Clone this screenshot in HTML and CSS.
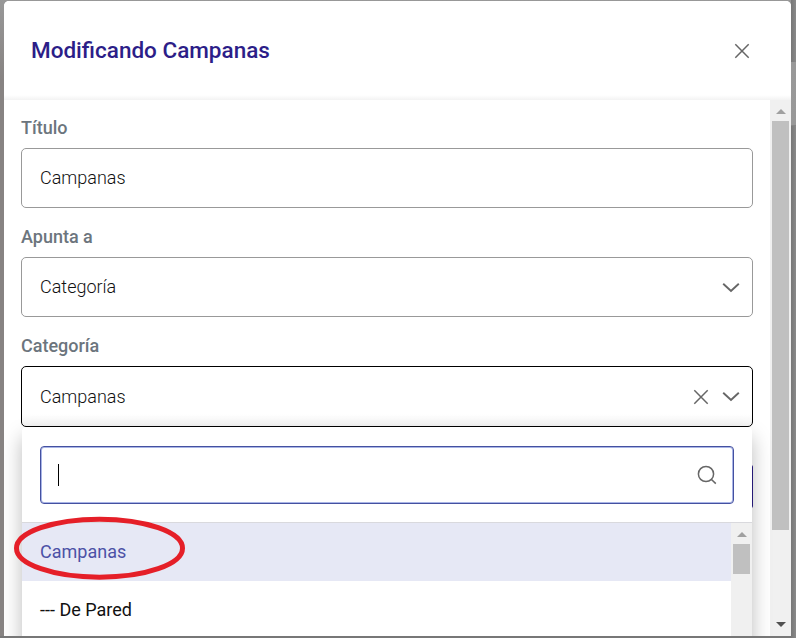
FILE: index.html
```html
<!DOCTYPE html>
<html lang="es">
<head>
<meta charset="utf-8">
<title>Modificando Campanas</title>
<link rel="stylesheet" href="styles.css">
</head>
<body>
<div class="modal">
  <header class="header">
    <h1>Modificando Campanas</h1>
    <svg class="close" width="16" height="16" viewBox="0 0 16 16"><path d="M1.3 1.3 14.7 14.7M14.7 1.3 1.3 14.7"/></svg>
  </header>
  <div class="body">
    <form class="form">
      <div class="label">Título</div>
      <div class="field"><span>Campanas</span></div>
      <div class="label">Apunta a</div>
      <div class="field"><span>Categoría</span>
        <svg class="chevron" width="18" height="11" viewBox="0 0 18 11"><path d="M1.2 1.7 9 9 16.8 1.7"/></svg>
      </div>
      <div class="label">Categoría</div>
      <div class="field open"><span>Campanas</span>
        <svg class="clear" width="16" height="16" viewBox="0 0 16 16"><path d="M1.3 1.3 14.7 14.7M14.7 1.3 1.3 14.7"/></svg>
        <svg class="chevron" width="18" height="11" viewBox="0 0 18 11"><path d="M1.2 1.7 9 9 16.8 1.7"/></svg>
        <div class="button-edge"></div>
        <div class="dropdown">
          <div class="search">
            <i class="caret"></i>
            <svg width="20" height="20" viewBox="0 0 20 20"><circle cx="9" cy="9" r="7.6"/><path d="M14.2 14.2 18.8 18.6"/></svg>
          </div>
          <div class="results">
            <div class="options">
              <div class="option selected">Campanas</div>
              <div class="option">--- De Pared</div>
            </div>
            <div class="scrollbar"><i class="up"></i><i class="thumb small"></i></div>
          </div>
        </div>
      </div>
    </form>
    <div class="scrollbar"><i class="up"></i><i class="thumb"></i><i class="down"></i></div>
  </div>
</div>
<svg class="mark" width="172" height="64" viewBox="0 0 172 64"><ellipse cx="85.5" cy="32.2" rx="83" ry="29"/></svg>
</body>
</html>
```
FILE: styles.css
```css
* { box-sizing: border-box; }
body {
  margin: 0;
  height: 638px;
  overflow: hidden;
  padding: 1px 5px 2px 4px;
  background:
    linear-gradient(#858585, #858585) 791px 125px / 5px 1px no-repeat,
    linear-gradient(#999, #989898) 791px 62px / 5px 63px no-repeat,
    linear-gradient(90deg, #777, #8a8a8a) 791px 0 / 5px 638px no-repeat,
    linear-gradient(#777, #777) 0 636px / 796px 2px no-repeat,
    linear-gradient(#989898, #878382 80px, #878382);
  font-family: Roboto, "Liberation Sans", sans-serif;
  font-size: 18px;
  color: #111;
}
.modal {
  display: flex;
  flex-direction: column;
  width: 787px;
  height: 635px;
  overflow: hidden;
  background: #fff;
  border-radius: 5px 5px 0 0;
}
.header {
  display: flex;
  flex: 0 0 99px;
  align-items: center;
  justify-content: space-between;
  padding: 0 41px 0 27px;
  background: linear-gradient(#fff 94px, #f3f3f3);
}
h1 {
  margin: 0;
  padding-bottom: 2px;
  font-size: 22.5px;
  font-weight: 500;
  line-height: 30px;
  color: #2c1e88;
}
svg { display: block; fill: none; stroke: #666; stroke-width: 1.5; }
.body { display: flex; flex: 1; min-height: 0; }
.form { flex: 1; padding: 17px 17px 0; }
.label {
  height: 22px;
  margin-bottom: 9px;
  font-weight: 500;
  line-height: 22px;
  color: #6c757d;
}
.field {
  position: relative;
  display: flex;
  align-items: center;
  width: 732px;
  height: 60px;
  margin-bottom: 18px;
  padding: 0 12px 0 18px;
  border: 1px solid #999;
  border-radius: 5px;
  font-weight: 300;
}
.field span { flex: 1; padding-bottom: 2px; }
.field.open span { padding-bottom: 0; }
.field.open {
  height: 61px;
  border-color: #000;
  background: linear-gradient(#fff 47px, #f4f4f4);
}
.clear { margin-right: 13px; }
.chevron { stroke-width: 1.9; }
.button-edge {
  position: absolute;
  top: 98px;
  right: -1px;
  width: 4px;
  height: 43px;
  border-right: 1px solid #2c1e88;
  border-radius: 2px;
}
.dropdown {
  position: absolute;
  top: 60px;
  left: 0;
  width: 730px;
  height: 230px;
  padding-top: 19px;
  background: #fff;
  border-radius: 4px;
  box-shadow: 0 10px 20px rgba(0, 0, 0, .27);
  font-weight: 400;
}
.search {
  display: flex;
  align-items: center;
  justify-content: space-between;
  height: 58px;
  margin: 0 18px 18px;
  padding: 0 16px 0 17px;
  border: 1px solid #4450a0;
  border-radius: 4px;
  box-shadow: inset 0 0 0 1px #a9b5e6;
}
.caret { width: 1px; height: 22px; background: #000; }
.results { display: flex; height: 140px; border-top: 1px solid #d9d9dd; }
.options { flex: 1; }
.option { height: 58px; padding-left: 18px; line-height: 57px; }
.selected { background: #e6e8f5; color: #4c51a6; }
.scrollbar {
  display: flex;
  flex: 0 0 21px;
  flex-direction: column;
  align-items: center;
  background: #f0f0f0;
}
.up, .down { border: solid transparent; border-width: 0 5px; }
.up { margin: 9px 0 7px; border-bottom: 5px solid #a0a0a0; }
.down { margin: auto 0 9px; border-top: 5px solid #505050; }
.thumb { width: 17px; height: 409px; background: #c0c0c0; }
.thumb.small { height: 30px; }
.mark {
  position: absolute;
  left: 14px;
  top: 516px;
  stroke: #e51f28;
  stroke-width: 5;
}
```
